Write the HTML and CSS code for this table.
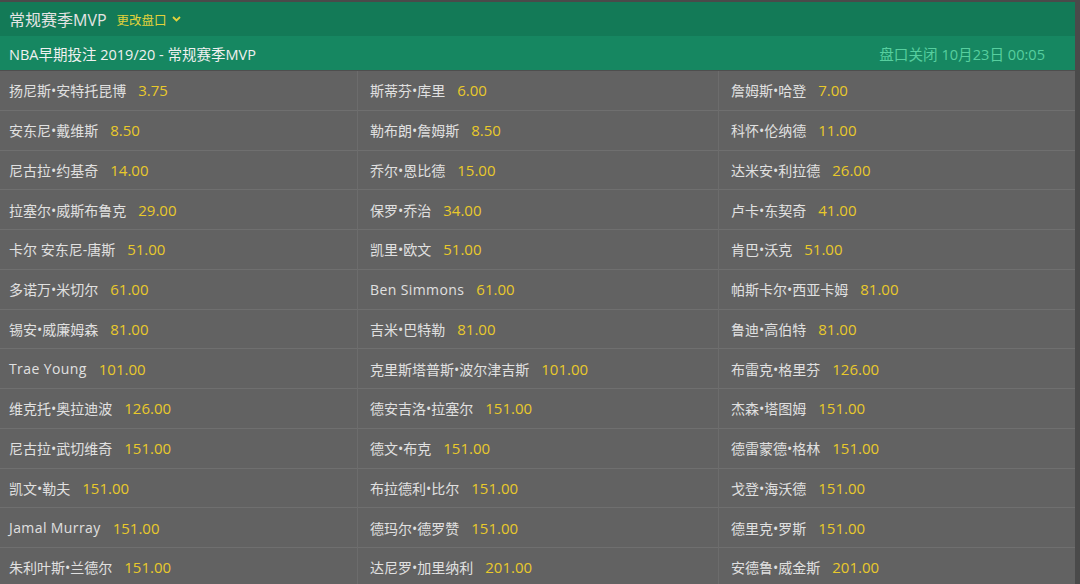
FILE: index.html
```html
<!DOCTYPE html>
<html lang="zh">
<head>
<meta charset="utf-8">
<link rel="stylesheet" href="styles.css">
</head>
<body>
<div class="page">
  <div class="head1">
    <span class="title">常规赛季MVP</span>
    <span class="change">更改盘口
      <svg class="chev" width="9" height="6" viewBox="0 0 9 6"><path d="M1 1 L4.5 4.5 L8 1" fill="none" stroke="#e2d23b" stroke-width="1.8"/></svg>
    </span>
  </div>
  <div class="head2">
    <span class="sub">NBA早期投注 2019/20 - 常规赛季MVP</span>
    <span class="close">盘口关闭 10月23日 00:05</span>
  </div>
  <div class="grid">
    <div class="cell"><span class="n">扬尼斯•安特托昆博</span><span class="o">3.75</span></div>
    <div class="cell"><span class="n">斯蒂芬•库里</span><span class="o">6.00</span></div>
    <div class="cell"><span class="n">詹姆斯•哈登</span><span class="o">7.00</span></div>

    <div class="cell"><span class="n">安东尼•戴维斯</span><span class="o">8.50</span></div>
    <div class="cell"><span class="n">勒布朗•詹姆斯</span><span class="o">8.50</span></div>
    <div class="cell"><span class="n">科怀•伦纳德</span><span class="o">11.00</span></div>

    <div class="cell"><span class="n">尼古拉•约基奇</span><span class="o">14.00</span></div>
    <div class="cell"><span class="n">乔尔•恩比德</span><span class="o">15.00</span></div>
    <div class="cell"><span class="n">达米安•利拉德</span><span class="o">26.00</span></div>

    <div class="cell"><span class="n">拉塞尔•威斯布鲁克</span><span class="o">29.00</span></div>
    <div class="cell"><span class="n">保罗•乔治</span><span class="o">34.00</span></div>
    <div class="cell"><span class="n">卢卡•东契奇</span><span class="o">41.00</span></div>

    <div class="cell"><span class="n">卡尔 安东尼-唐斯</span><span class="o">51.00</span></div>
    <div class="cell"><span class="n">凯里•欧文</span><span class="o">51.00</span></div>
    <div class="cell"><span class="n">肯巴•沃克</span><span class="o">51.00</span></div>

    <div class="cell"><span class="n">多诺万•米切尔</span><span class="o">61.00</span></div>
    <div class="cell"><span class="n lat">Ben Simmons</span><span class="o">61.00</span></div>
    <div class="cell"><span class="n">帕斯卡尔•西亚卡姆</span><span class="o">81.00</span></div>

    <div class="cell"><span class="n">锡安•威廉姆森</span><span class="o">81.00</span></div>
    <div class="cell"><span class="n">吉米•巴特勒</span><span class="o">81.00</span></div>
    <div class="cell"><span class="n">鲁迪•高伯特</span><span class="o">81.00</span></div>

    <div class="cell"><span class="n lat">Trae Young</span><span class="o">101.00</span></div>
    <div class="cell"><span class="n">克里斯塔普斯•波尔津吉斯</span><span class="o">101.00</span></div>
    <div class="cell"><span class="n">布雷克•格里芬</span><span class="o">126.00</span></div>

    <div class="cell"><span class="n">维克托•奥拉迪波</span><span class="o">126.00</span></div>
    <div class="cell"><span class="n">德安吉洛•拉塞尔</span><span class="o">151.00</span></div>
    <div class="cell"><span class="n">杰森•塔图姆</span><span class="o">151.00</span></div>

    <div class="cell"><span class="n">尼古拉•武切维奇</span><span class="o">151.00</span></div>
    <div class="cell"><span class="n">德文•布克</span><span class="o">151.00</span></div>
    <div class="cell"><span class="n">德雷蒙德•格林</span><span class="o">151.00</span></div>

    <div class="cell"><span class="n">凯文•勒夫</span><span class="o">151.00</span></div>
    <div class="cell"><span class="n">布拉德利•比尔</span><span class="o">151.00</span></div>
    <div class="cell"><span class="n">戈登•海沃德</span><span class="o">151.00</span></div>

    <div class="cell"><span class="n lat">Jamal Murray</span><span class="o">151.00</span></div>
    <div class="cell"><span class="n">德玛尔•德罗赞</span><span class="o">151.00</span></div>
    <div class="cell"><span class="n">德里克•罗斯</span><span class="o">151.00</span></div>

    <div class="cell"><span class="n">朱利叶斯•兰德尔</span><span class="o">151.00</span></div>
    <div class="cell"><span class="n">达尼罗•加里纳利</span><span class="o">201.00</span></div>
    <div class="cell"><span class="n">安德鲁•威金斯</span><span class="o">201.00</span></div>
  </div>
</div>
</body>
</html>
```

FILE: styles.css
```css
html, body {
  margin: 0;
  padding: 0;
  height: 100%;
  overflow: hidden;
}
body {
  background: #4a4a4a;
  font-family: "Open Sans", "Noto Sans CJK SC", sans-serif;
}
.page {
  margin-top: 2px;
  width: 1075px;
  background: #626262;
}
.head1 {
  height: 34px;
  background: #137a57;
  display: flex;
  align-items: center;
  padding-left: 9px;
}
.title {
  color: #e4e4e4;
  font-size: 16px;
}
.change {
  color: #e2d23b;
  font-size: 12.5px;
  margin-left: 10px;
  display: flex;
  align-items: center;
}
.chev {
  margin-left: 5px;
}
.head2 {
  height: 34px;
  background: #168761;
  display: flex;
  align-items: center;
  justify-content: space-between;
  padding: 0 30px 0 9px;
  border-bottom: 1px solid #4e4e4e;
}
.sub {
  color: #f0f0f0;
  font-size: 14.5px;
}
.close {
  color: #57cf9f;
  font-size: 14.6px;
}
.grid {
  display: grid;
  grid-template-columns: 357px 361px 1fr;
}
.cell {
  height: 38.75px;
  border-bottom: 1px solid #6f6f6f;
  display: flex;
  align-items: center;
  padding-left: 13px;
  box-sizing: content-box;
}
.cell:nth-child(3n+1) {
  padding-left: 9px;
}
.cell:nth-child(3n+2), .cell:nth-child(3n) {
  border-left: 1px solid #6c6c6c;
  padding-left: 12px;
}
.n {
  color: #e0e0e0;
  font-size: 14px;
}
.n.lat {
  letter-spacing: 0.4px;
}
.o {
  color: #e9c92b;
  font-size: 15px;
  margin-left: 12px;
}
```
